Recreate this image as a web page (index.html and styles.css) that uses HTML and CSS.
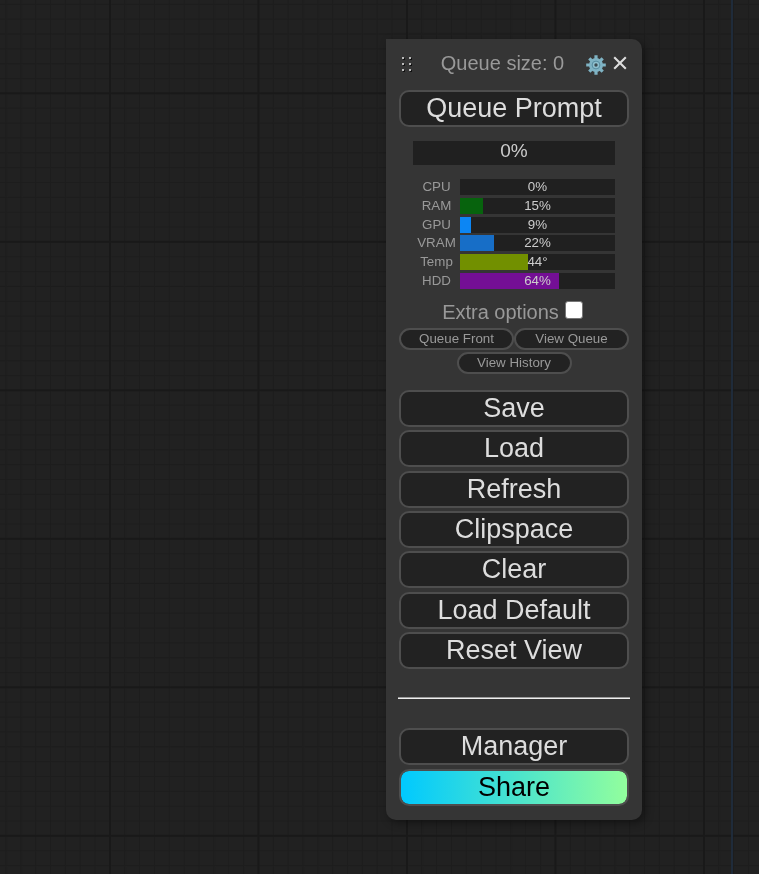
FILE: index.html
```html
<!DOCTYPE html>
<html lang="en">
<head>
<meta charset="utf-8">
<meta name="viewport" content="width=device-width, initial-scale=1">
<title>Queue</title>
<link rel="stylesheet" href="styles.css">
</head>
<body>
<svg class="grid" aria-hidden="true">
  <defs>
    <pattern id="minor" x="5.5" y="3.8" width="14.85" height="14.85" patternUnits="userSpaceOnUse">
      <path d="M0 .5H14.85M.5 0V14.85" stroke="#1d1d1d" stroke-width="1"/>
    </pattern>
    <pattern id="major" x="109" y="92.3" width="148.5" height="148.5" patternUnits="userSpaceOnUse">
      <path d="M0 1H148.5M1 0V148.5" stroke="#191919" stroke-width="2"/>
    </pattern>
  </defs>
  <rect width="100%" height="100%" fill="url(#minor)"/>
  <rect width="100%" height="100%" fill="url(#major)"/>
  <path d="M732 0V10000" stroke="#1f2b3a" stroke-width="2"/>
</svg>
<main class="menu">
  <header class="header">
    <svg class="handle" viewBox="0 0 12 18" aria-hidden="true">
      <path fill="#111" d="M2 2h2v2H2zM9 2h2v2H9zM2 8h2v2H2zM9 8h2v2H9zM2 14h2v2H2zM9 14h2v2H9z"/>
      <path fill="#bbb" d="M1 1h2v2H1zM8 1h2v2H8zM1 7h2v2H1zM8 7h2v2H8zM1 13h2v2H1zM8 13h2v2H8z"/>
    </svg>
    <span class="queue-size">Queue size: 0</span>
    <button class="icon-button" type="button" aria-label="Settings">
      <svg class="gear" viewBox="0 0 20 20" aria-hidden="true">
        <g stroke="#7fb3c4" stroke-width="3.2">
          <path d="M10 .2V19.8M.2 10H19.8M3.3 3.3L16.7 16.7M16.7 3.3L3.3 16.7"/>
        </g>
        <circle cx="10" cy="10" r="7" fill="#7fb3c4"/>
        <circle cx="10" cy="10" r="3.9" fill="#8fc0cf" stroke="#568ca0" stroke-width="1"/>
        <circle cx="10" cy="10" r="1.7" fill="#3a4b52"/>
      </svg>
    </button>
    <button class="icon-button" type="button" aria-label="Close">
      <svg class="close" viewBox="0 0 14 14" aria-hidden="true">
        <path d="M1.2 1.2L12.8 12.8M12.8 1.2L1.2 12.8" stroke="#ddd" stroke-width="2.1"/>
      </svg>
    </button>
  </header>

  <button class="button" type="button">Queue Prompt</button>

  <div class="progress">0%</div>

  <section class="monitors" aria-label="System monitors">
    <div class="monitor"><span class="name">CPU</span><div class="bar"><div class="fill" style="width:0%"></div><span class="value">0%</span></div></div>
    <div class="monitor"><span class="name">RAM</span><div class="bar"><div class="fill ram" style="width:15%"></div><span class="value">15%</span></div></div>
    <div class="monitor"><span class="name">GPU</span><div class="bar"><div class="fill gpu" style="width:7%"></div><span class="value">9%</span></div></div>
    <div class="monitor"><span class="name">VRAM</span><div class="bar"><div class="fill vram" style="width:22%"></div><span class="value">22%</span></div></div>
    <div class="monitor"><span class="name">Temp</span><div class="bar"><div class="fill temp" style="width:44%"></div><span class="value">44°</span></div></div>
    <div class="monitor"><span class="name">HDD</span><div class="bar"><div class="fill hdd" style="width:64%"></div><span class="value">64%</span></div></div>
  </section>

  <div class="extra">
    <label for="extra">Extra options</label>
    <input id="extra" class="check" type="checkbox">
  </div>

  <div class="small-buttons">
    <button class="small" type="button">Queue Front</button>
    <button class="small" type="button">View Queue</button>
    <button class="small" type="button">View History</button>
  </div>

  <div class="actions">
    <button class="button" type="button">Save</button>
    <button class="button" type="button">Load</button>
    <button class="button" type="button">Refresh</button>
    <button class="button" type="button">Clipspace</button>
    <button class="button" type="button">Clear</button>
    <button class="button" type="button">Load Default</button>
    <button class="button" type="button">Reset View</button>
  </div>

  <hr class="rule">

  <div class="footer">
    <button class="button" type="button">Manager</button>
    <button class="button share" type="button">Share</button>
  </div>
</main>
</body>
</html>
```
FILE: styles.css
```css
* {
  box-sizing: border-box;
}

body {
  margin: 0;
  min-height: 100vh;
  background: #212121;
  color: #999;
  font-family: "Liberation Sans", Arial, sans-serif;
  font-size: 20px;
}

.grid {
  position: fixed;
  inset: 0;
  width: 100%;
  height: 100%;
}

/* Floating panel over the canvas */
.menu {
  position: absolute;
  top: 39px;
  right: 117px;
  width: 256px;
  padding: 0 13px 14px;
  display: flex;
  flex-direction: column;
  background: #353535;
  border-radius: 0 10px 10px 10px;
  box-shadow: 3px 3px 8px rgba(0, 0, 0, 0.4);
}

.header {
  display: flex;
  align-items: center;
  height: 51px;
  padding-bottom: 4px;
}

.handle {
  width: 12px;
  height: 18px;
  margin: 4px 0 0 2px;
}

.queue-size {
  flex: 1;
  padding-left: 6px;
  line-height: 24px;
  text-align: center;
}

.icon-button {
  display: flex;
  padding: 0;
  border: 0;
  background: none;
}

.gear {
  width: 20px;
  height: 20px;
  margin-top: 4px;
}

.close {
  width: 14px;
  height: 14px;
  margin: 0 2px 0 7px;
}

.button {
  display: block;
  width: 100%;
  height: 37px;
  padding: 0;
  border: 2px solid #4e4e4e;
  border-radius: 10px;
  background: #222;
  color: #ddd;
  font-family: inherit;
  font-size: 27px;
  line-height: 31px;
}

.progress {
  height: 24px;
  margin: 14px 14px 0;
  background: #202020;
  color: #ccc;
  font-size: 19px;
  line-height: 20px;
  text-align: center;
}

.monitors {
  display: flex;
  flex-direction: column;
  justify-content: space-between;
  height: 110px;
  margin: 14px 14px 0;
  font-size: 10pt;
  line-height: 16px;
}

.monitor {
  display: flex;
}

.name {
  width: 47px;
  text-align: center;
}

.bar {
  position: relative;
  flex: 1;
  height: 16px;
  background: #202020;
}

.fill {
  height: 100%;
}

.ram { background: #07630d; }
.gpu { background: #0c86f4; }
.vram { background: #176ec7; }
.temp { background: #729000; }
.hdd { background: #740f95; }

.value {
  position: absolute;
  inset: 0;
  color: #ccc;
  text-align: center;
}

.extra {
  display: flex;
  justify-content: center;
  gap: 6px;
  height: 39px;
  padding: 11px 3px 0 0;
  line-height: 24px;
}

.check {
  appearance: none;
  width: 18px;
  height: 18px;
  margin: 1px 0 0;
  border: 1px solid #767676;
  border-radius: 3px;
  background: #fff;
}

.small-buttons {
  display: flex;
  flex-wrap: wrap;
  justify-content: center;
  row-gap: 2px;
}

.small {
  width: 50%;
  height: 22px;
  padding: 0;
  border: 2px solid #4e4e4e;
  border-radius: 11px;
  background: #222;
  color: #999;
  font-family: inherit;
  font-size: 10pt;
  line-height: 16px;
}

.actions {
  display: flex;
  flex-direction: column;
  justify-content: space-between;
  height: 279px;
  margin-top: 16px;
}

.rule {
  width: calc(100% + 2px);
  height: 2px;
  margin: 28px -1px 29px;
  border: 0;
  border-top: 1px solid #9a9a9a;
  background: #eee;
}

.footer {
  display: flex;
  flex-direction: column;
  gap: 4px;
}

.share {
  background: linear-gradient(90deg, #00c9ff, #92fe9d) padding-box;
  color: #000;
}
```
